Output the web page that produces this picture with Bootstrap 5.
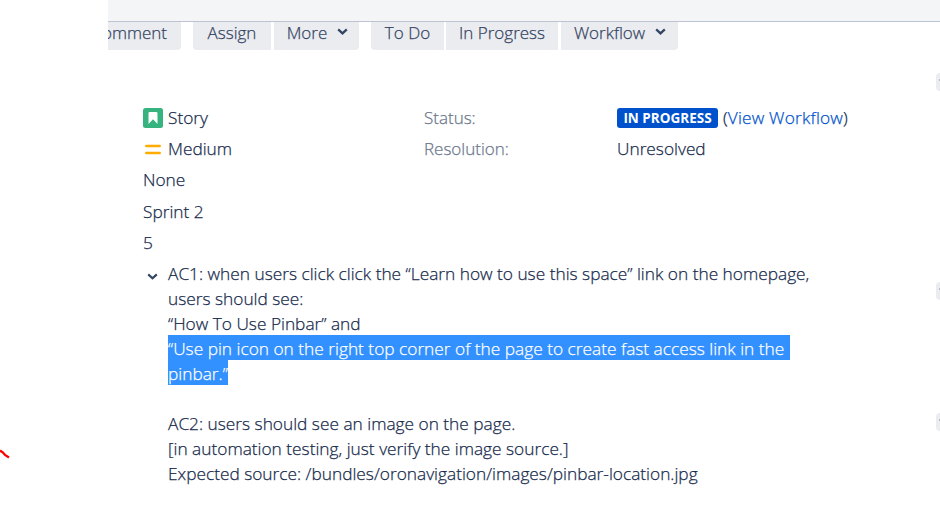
<!DOCTYPE html>
<html lang="en">
<head>
<meta charset="utf-8">
<meta name="viewport" content="width=device-width, initial-scale=1">
<title>Issue details</title>
<link href="https://cdn.jsdelivr.net/npm/bootstrap@5.3.0/dist/css/bootstrap.min.css" rel="stylesheet">
<style>
  body { font-family: "Open Sans", "Noto Sans", sans-serif; font-size: 17.3px; font-weight: 300; line-height: 25px; color: #172b4d; height: 525px; overflow: hidden; -webkit-text-stroke: .25px currentColor; }
  .issue { margin-left: 108px; }
  .topbar { height: 22px; background: #f4f5f7; border-bottom: 1px solid #bcc4d2; }
  .toolbar { height: 28px; }
  .tool { --bs-btn-padding-x: 0; --bs-btn-padding-y: 0; --bs-btn-border-width: 0; --bs-btn-bg: #ebecf0; --bs-btn-color: #344563; --bs-btn-hover-bg: #dfe1e6; --bs-btn-font-size: 17px; --bs-btn-line-height: 21px; --bs-btn-border-radius: 0; font-weight: 300; height: 28px; padding-bottom: 7px; white-space: nowrap; }
  .round-l { border-bottom-left-radius: 4px; }
  .round-r { border-bottom-right-radius: 4px; }
  .tool svg { margin: 6px 0 0 10px; }
  .w-comment { width: 73px; padding-right: 14px; }
  .w-assign { width: 78px; margin-left: 12px; }
  .w-more { width: 85px; margin-left: 3px; padding-left: 2px; }
  .w-todo { width: 73px; margin-left: 12px; }
  .w-progress { width: 112px; margin-left: 2px; }
  .w-workflow { width: 117px; margin-left: 3px; padding-left: 1px; }
  .details { margin: 55px 0 0 35px; }
  .field { height: 31.2px; }
  .value { width: 281px; }
  .field svg { margin: 3px 5px 0 0; }
  .label { width: 193px; color: #6b778c; font-size: 17px; }
  .status { width: 101px; height: 20px; margin: 3px 5px 0 0; padding: 0; border-radius: 3px; background: #0052cc; font-size: 13.5px; font-weight: 700; line-height: 20px; -webkit-text-stroke: 0; }
  .flow-link { color: #0052cc; letter-spacing: .2px; }
  .description svg { margin: 12px 10px 0 4px; }
  .highlight { margin-top: -1px; margin-bottom: 1px; }
  .selected { background: #3390ff; color: #fff; height: 25px; line-height: 27px; }
  .wide { padding-right: 6px; }
  .side { position: absolute; top: 73px; right: 0; width: 4px; }
  .handle { height: 18px; background: #ebecf0; border-radius: 4px 0 0 4px; }
  .handle i { width: 1px; height: 2px; background: #b3b9c6; margin-top: 6px; }
  .handle-mid { margin-top: 191px; }
  .handle-low { margin-top: 113px; }
  .stroke-end { position: absolute; left: 0; top: 448px; }
</style>
<script src="https://cdn.jsdelivr.net/npm/bootstrap@5.3.0/dist/js/bootstrap.bundle.min.js" defer></script>
</head>
<body class="bg-white position-relative">
<main class="issue">
  <header class="topbar"></header>
  <nav class="toolbar d-flex">
    <button class="btn tool w-comment round-r d-flex justify-content-end overflow-hidden">Comment</button>
    <button class="btn tool w-assign round-l">Assign</button>
    <button class="btn tool w-more round-r d-flex justify-content-center">More<svg width="11" height="8" viewBox="0 0 11 8"><path d="M1.2 1.4 5.5 5.4 9.8 1.4" fill="none" stroke="#344563" stroke-width="2.3"/></svg></button>
    <button class="btn tool w-todo round-l">To Do</button>
    <button class="btn tool w-progress">In Progress</button>
    <button class="btn tool w-workflow round-r d-flex justify-content-center">Workflow<svg width="11" height="8" viewBox="0 0 11 8"><path d="M1.2 1.4 5.5 5.4 9.8 1.4" fill="none" stroke="#344563" stroke-width="2.3"/></svg></button>
  </nav>
  <section class="details">
    <div class="field d-flex">
      <div class="value d-flex"><svg width="20" height="20" viewBox="0 0 20 20"><rect width="20" height="20" rx="2.5" fill="#36b37e"/><path d="M5.5 16V5.3Q5.5 4 6.8 4H13.2Q14.5 4 14.5 5.3V16L10 11.3Z" fill="#fff"/></svg>Story</div>
      <div class="label">Status:</div>
      <span class="badge status">IN PROGRESS</span><span>(<a href="#" class="flow-link text-decoration-none">View Workflow</a>)</span>
    </div>
    <div class="field d-flex">
      <div class="value d-flex"><svg width="20" height="20" viewBox="0 0 20 20"><path d="M3.3 7.1H16.7M3.3 14.1H16.7" stroke="#ffab00" stroke-width="2.5" stroke-linecap="round"/></svg>Medium</div>
      <div class="label">Resolution:</div>
      <span>Unresolved</span>
    </div>
    <div class="field">None</div>
    <div class="field">Sprint 2</div>
    <div class="field">5</div>
    <div class="description d-flex">
      <svg width="11" height="8" viewBox="0 0 11 8" class="flex-shrink-0"><path d="M1.2 1.4 5.5 5.2 9.8 1.4" fill="none" stroke="#344563" stroke-width="2.2"/></svg>
      <div class="text-nowrap">
        <div>AC1: when users click click the “Learn how to use this space” link on the homepage,</div>
        <div>users should see:</div>
        <div>“How To Use Pinbar” and</div>
        <div class="highlight d-flex flex-column align-items-start">
          <span class="selected wide">“Use pin icon on the right top corner of the page to create fast access link in the</span>
          <span class="selected">pinbar.”</span>
        </div>
        <br>
        <div>AC2: users should see an image on the page.</div>
        <div>[in automation testing, just verify the image source.]</div>
        <div>Expected source: /bundles/oronavigation/images/pinbar-location.jpg</div>
      </div>
    </div>
  </section>
</main>
<aside class="side d-flex flex-column">
  <div class="handle d-flex justify-content-end"><i></i></div>
  <div class="handle handle-mid d-flex justify-content-end"><i></i></div>
  <div class="handle handle-low d-flex justify-content-end"><i></i></div>
</aside>
<svg class="stroke-end" width="11" height="11" viewBox="0 0 11 11"><path d="M0 2.5 3 4.5 5 7 9 9.5" fill="none" stroke="#f00" stroke-width="2.3"/></svg>
</body>
</html>
